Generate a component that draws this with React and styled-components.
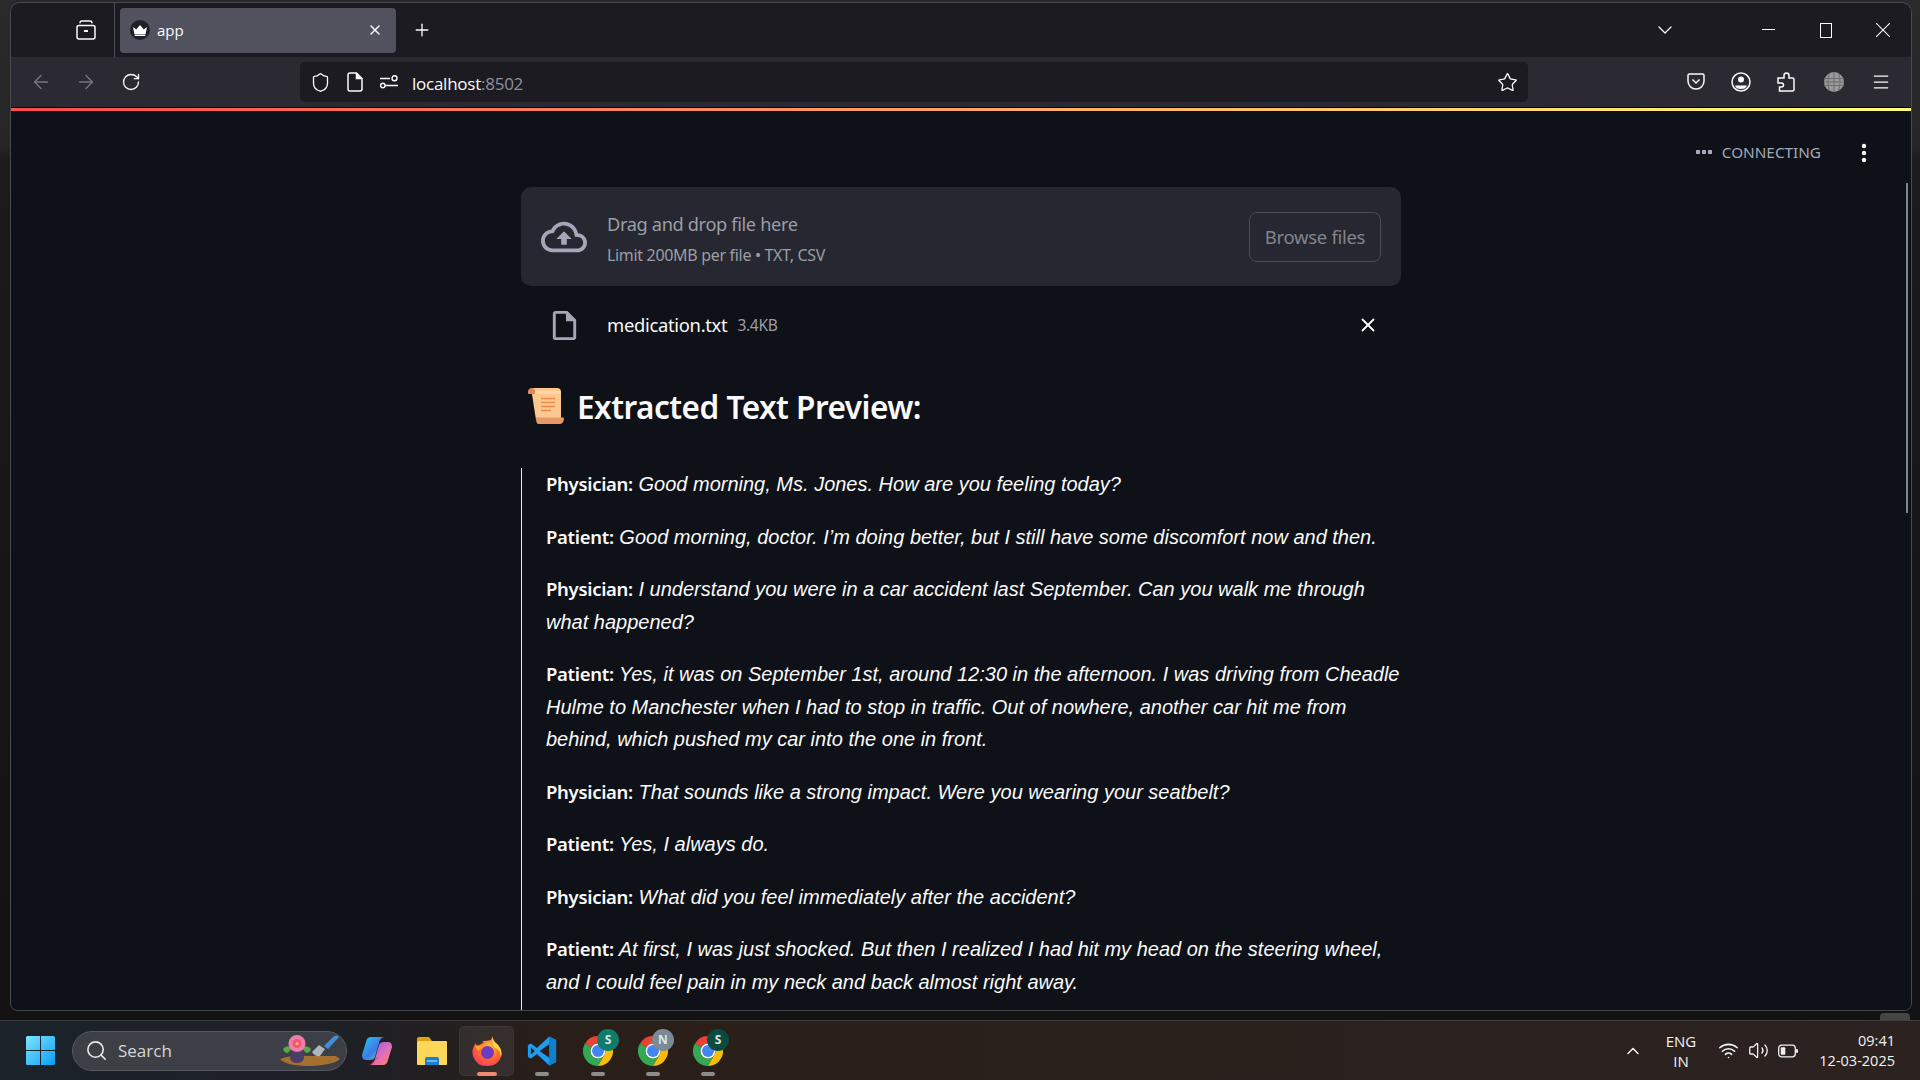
import React from 'react';
import styled, { createGlobalStyle } from 'styled-components';
import { ArrowLeft, ArrowRight, RotateCw, Star, Shield, Plus, X, ChevronDown, ChevronUp, Search, Wifi, Volume2, Menu, MoreVertical } from 'lucide-react';

const GlobalStyle = createGlobalStyle`
  html, body { margin: 0; padding: 0; width: 1920px; height: 1080px; overflow: hidden; background: #161616; }
  * { box-sizing: border-box; }
`;

const Colors = {
  Chrome: '#1c1b22',
  Toolbar: '#2b2a33',
  Page: '#0e1117',
  Text: '#fafafa',
  Muted: '#a3a8b8',
};

const UiFont = '"Noto Sans", "Open Sans", sans-serif';
const SystemFont = '"Open Sans", "Noto Sans", sans-serif';

const Screen = styled.div`
  position: relative;
  width: 1920px;
  height: 1080px;
  display: flex;
  flex-direction: column;
  background: linear-gradient(180deg, #2a2a2a 0, #262626 145px, #1b1b1b 160px, #161616 600px, #121212 100%);
`;

const BrowserWindow = styled.div`
  margin: 2px 8px 9px 10px;
  width: 1902px;
  height: 1009px;
  border: 1px solid #4a4a4e;
  border-bottom-color: #45464a;
  border-radius: 10px 10px 8px 8px;
  overflow: hidden;
  display: flex;
  flex-direction: column;
`;

const TabStrip = styled.div`
  height: 54px;
  flex: none;
  display: flex;
  align-items: center;
  background: ${Colors.Chrome};
  color: #fbfbfe;
`;

const Slot = styled.div`
  width: ${p => p.$w}px;
  margin-left: ${p => p.$ml || 0}px;
  height: 40px;
  flex: none;
  display: flex;
  align-items: center;
  justify-content: center;
  color: ${p => p.$color || '#fbfbfe'};
`;

const Separator = styled.div`
  width: 1px;
  height: 54px;
  margin-left: 8px;
  background: #4d4d55;
`;

const Tab = styled.div`
  width: 276px;
  height: 45px;
  margin-left: 5px;
  padding: 0 13px 0 10px;
  display: flex;
  align-items: center;
  border-radius: 4px;
  background: #52525e;
  font: 15px ${SystemFont};
`;

const Favicon = styled.div`
  width: 20px;
  height: 20px;
  border-radius: 50%;
  background: #1e1f2a;
  display: flex;
  align-items: center;
  justify-content: center;
  margin-right: 7px;
`;

const TabTitle = styled.span`
  flex: 1;
`;

const Spacer = styled.div`
  flex: 1;
`;

const NavBar = styled.div`
  height: 50px;
  flex: none;
  display: flex;
  align-items: center;
  padding-left: 7px;
  background: ${Colors.Toolbar};
`;

const AddressBar = styled.div`
  width: 1228px;
  height: 40px;
  margin-left: 147px;
  padding: 0 4px 0 2px;
  display: flex;
  align-items: center;
  border-radius: 5px;
  background: ${Colors.Chrome};
`;

const Url = styled.div`
  margin: 2px 0 0 6px;
  flex: 1;
  font: 17px ${SystemFont};
  color: #fbfbfe;
  letter-spacing: -0.25px;
`;

const Port = styled.span`
  color: #8f8f9d;
`;

const Rainbow = styled.div`
  height: 4px;
  flex: none;
  border-top: 1px solid #000;
  background: linear-gradient(90deg, #ff4b4b, #fffd80);
`;

const Page = styled.div`
  position: relative;
  flex: 1;
  overflow: hidden;
  background: ${Colors.Page};
  color: ${Colors.Text};
`;

const Status = styled.div`
  position: absolute;
  top: 29px;
  right: 90px;
  height: 24px;
  display: flex;
  align-items: center;
  gap: 10px;
  font: 15.3px ${UiFont};
  color: #a3a8b8;
`;

const Dots = styled.div`
  display: flex;
  gap: 2px;
`;

const Dot = styled.i`
  width: 4px;
  height: 4px;
  background: #a3a8b8;
`;

const Kebab = styled.div`
  position: absolute;
  top: 30px;
  right: 35px;
  display: flex;
  color: #fafafa;
`;

const ScrollThumb = styled.div`
  position: absolute;
  top: 72px;
  right: 3px;
  width: 2px;
  height: 330px;
  background: #84858a;
`;

const Main = styled.main`
  width: 880px;
  margin: 0 auto;
  padding-top: 76px;
`;

const Dropzone = styled.section`
  height: 99px;
  padding: 0 20px;
  display: flex;
  align-items: center;
  border-radius: 10px;
  background: #262730;
`;

const DropIcon = styled.div`
  width: 46px;
  display: flex;
  margin-right: 20px;
  color: ${Colors.Muted};
`;

const DropText = styled.div`
  flex: 1;
  padding-top: 4px;
`;

const DropTitle = styled.div`
  font: 18.2px/24px ${UiFont};
  color: #9c9ea6;
  letter-spacing: -0.35px;
`;

const DropHint = styled.div`
  margin-top: 8px;
  font: 16px/22px ${UiFont};
  color: #9c9ea6;
  letter-spacing: -0.32px;
`;

const BrowseButton = styled.button`
  width: 132px;
  height: 50px;
  border: 1px solid #4b4c54;
  border-radius: 8px;
  background: transparent;
  font: 18.5px ${UiFont};
  color: #83848b;
  letter-spacing: -0.3px;
`;

const FileRow = styled.div`
  height: 56px;
  margin-top: 11px;
  padding: 0 20px;
  display: flex;
  align-items: center;
`;

const FileIcon = styled.div`
  width: 46px;
  margin-right: 20px;
  display: flex;
  justify-content: center;
  color: ${Colors.Muted};
`;

const FileName = styled.span`
  margin-bottom: 2px;
  font: 18.4px ${UiFont};
  letter-spacing: -0.3px;
`;

const FileSize = styled.span`
  margin-left: 10px;
  font: 15.5px ${UiFont};
  color: #9c9ea6;
  letter-spacing: -0.3px;
`;

const FileClose = styled.div`
  margin-left: auto;
  margin-right: 2px;
  display: flex;
`;

const Heading = styled.h3`
  height: 60px;
  margin: 23px 0 0;
  padding-left: 7px;
  display: flex;
  align-items: center;
  gap: 13px;
  font: 600 31.5px ${UiFont};
  letter-spacing: -0.5px;
`;

const Quote = styled.blockquote`
  margin: 32px 0 0;
  padding: 0 0 40px 24px;
  border-left: 1px solid #e8e8ea;
  font: italic 20px/32.5px "Liberation Sans", Arial, sans-serif;
`;

const Line = styled.p`
  margin: 0 0 20px;
`;

const Speaker = styled.strong`
  font: 600 18.5px/1 ${UiFont};
  letter-spacing: -0.3px;
`;

const Taskbar = styled.footer`
  height: 60px;
  flex: none;
  display: flex;
  align-items: center;
  padding: 0 25px 0 26px;
  border-top: 1px solid #3d3d3f;
  background: linear-gradient(90deg, #1b222a 0, #1e2026 18%, #2a1e18 30%, #2a211d 60%, #2c2321 100%);
  color: #f2f2f2;
  font-family: ${SystemFont};
`;

const SearchPill = styled.div`
  width: 275px;
  height: 40px;
  margin-left: 17px;
  padding: 0 6px 0 12px;
  display: flex;
  align-items: center;
  border: 1px solid #55585e;
  border-radius: 20px;
  background: #3c3f46;
`;

const SearchLabel = styled.span`
  flex: 1;
  margin-left: 10px;
  font-size: 17px;
  color: #d6d6d6;
`;

const AppSlot = styled.div`
  position: relative;
  width: 55px;
  height: 50px;
  flex: none;
  display: flex;
  align-items: center;
  justify-content: center;
  margin-left: ${p => p.$ml || 0}px;
  ${p => p.$active && 'border-radius: 5px; background: rgba(255,255,255,.07); box-shadow: inset 0 0 0 1px rgba(255,255,255,.04);'}
`;

const Pip = styled.span`
  position: absolute;
  left: 50%;
  bottom: 0;
  width: ${p => (p.$active ? 20 : 14)}px;
  height: 4px;
  border-radius: 2px;
  transform: translateX(-50%);
  background: ${p => (p.$active ? '#ee8a70' : '#8c8c8c')};
`;

const Badge = styled.span`
  position: absolute;
  top: 3px;
  right: 6px;
  width: 22px;
  height: 22px;
  border-radius: 50%;
  display: flex;
  align-items: center;
  justify-content: center;
  background: ${p => p.$bg};
  color: #d9e6e3;
  font-size: 12px;
  font-weight: 700;
`;

const Tray = styled.div`
  margin-left: auto;
  display: flex;
  align-items: center;
`;

const TrayIcon = styled.div`
  width: ${p => p.$w}px;
  margin-left: ${p => p.$ml || 0}px;
  display: flex;
  justify-content: center;
`;

const Lang = styled.div`
  width: 40px;
  margin-left: 18px;
  text-align: center;
  font-size: 15px;
  line-height: 20px;
`;

const Clock = styled.div`
  width: 92px;
  margin-left: 3px;
  text-align: right;
  font-size: 14.5px;
  line-height: 20px;
`;

const EdgeTab = styled.div`
  position: absolute;
  right: 10px;
  top: 1013px;
  width: 30px;
  height: 7px;
  border-radius: 4px 4px 0 0;
  background: #454545;
`;

const Crown = () => (
  <svg width="14" height="11" viewBox="0 0 14 11" fill="#fff">
    <path d="M0 2l3.2 2.6L7 0l3.8 4.6L14 2l-1.4 7H1.4zM1.6 9.6h10.8V11H1.6z" />
  </svg>
);

const TabsIcon = () => (
  <svg width="20" height="20" viewBox="0 0 20 20" fill="none" stroke="#fbfbfe" strokeWidth="1.5">
    <rect x="1" y="5.5" width="18" height="13.5" rx="2" />
    <path d="M4 3.2Q4 1 6 1h8q2 0 2 2.2" />
    <path d="M8 11h4" strokeWidth="2" />
  </svg>
);

const DocIcon = () => (
  <svg width="16" height="20" viewBox="0 0 16 20" fill="none" stroke="#fbfbfe" strokeWidth="1.5">
    <path d="M3 1h6.5L15 6.5V17a2 2 0 0 1-2 2H3a2 2 0 0 1-2-2V3a2 2 0 0 1 2-2z" />
    <path d="M9.5 1v5.5H15" fill="#fbfbfe" />
  </svg>
);

const PermsIcon = () => (
  <svg width="18" height="14" viewBox="0 0 18 14" fill="none" stroke="#fbfbfe" strokeWidth="1.4">
    <path d="M0 3.5h10M5 10.5h13" />
    <circle cx="14.5" cy="3.2" r="2.5" />
    <circle cx="2.8" cy="10.5" r="2.2" />
  </svg>
);

const PocketIcon = () => (
  <svg width="18" height="18" viewBox="0 0 18 18" fill="none" stroke="#fbfbfe" strokeWidth="1.5">
    <path d="M2.5 1h13A1.5 1.5 0 0 1 17 2.5V8a8 8 0 0 1-16 0V2.5A1.5 1.5 0 0 1 2.5 1z" />
    <path d="M5.5 6.5L9 10l3.5-3.5" />
  </svg>
);

const ProfileIcon = () => (
  <svg width="20" height="20" viewBox="0 0 20 20">
    <circle cx="10" cy="10" r="9" fill="none" stroke="#fbfbfe" strokeWidth="1.5" />
    <circle cx="10" cy="7.5" r="3" fill="#fbfbfe" />
    <path d="M4 13.5h12Q15 17 10 17t-6-3.5z" fill="#fbfbfe" />
  </svg>
);

const PuzzleIcon = () => (
  <svg width="18" height="20" viewBox="0 0 18 20" fill="none" stroke="#fbfbfe" strokeWidth="1.5">
    <path d="M7 6V3.5a2.5 2.5 0 0 1 5 0V6h3.5A1.5 1.5 0 0 1 17 7.5V17.5a1.5 1.5 0 0 1-1.5 1.5H2.5v-4H4.5a2 2 0 0 0 0-4H1V6z" />
  </svg>
);

const GlobeIcon = () => (
  <svg width="20" height="20" viewBox="0 0 20 20">
    <circle cx="10" cy="10" r="10" fill="#9a9a9a" />
    <path d="M0 6.5h20M0 10h20M0 13.5h20M10 0v20M5.5 1c-2 5-2 13 0 18M14.5 1c2 5 2 13 0 18" stroke="#6d6d6d" strokeWidth="1" fill="none" />
  </svg>
);

const Maximize = () => (
  <svg width="12" height="15" viewBox="0 0 12 15" fill="none" stroke="#fbfbfe" strokeWidth="1">
    <rect x="0.5" y="0.5" width="11" height="14" />
  </svg>
);

const CloseThin = () => (
  <svg width="14" height="14" viewBox="0 0 14 14" stroke="#fbfbfe" strokeWidth="1.1">
    <path d="M0 0l14 14M14 0L0 14" />
  </svg>
);

const CloudUpload = () => (
  <svg width="46" height="46" viewBox="0 0 24 24" fill="currentColor">
    <path d="M19.35 10.04C18.67 6.59 15.64 4 12 4 9.11 4 6.6 5.64 5.35 8.04 2.34 8.36 0 10.91 0 14c0 3.31 2.69 6 6 6h13c2.76 0 5-2.24 5-5 0-2.64-2.05-4.78-4.65-4.96zM19 18H6c-2.21 0-4-1.79-4-4 0-2.05 1.53-3.76 3.56-3.97l1.07-.11.5-.95C8.08 7.14 9.94 6 12 6c2.62 0 4.88 1.86 5.39 4.43l.3 1.5 1.53.11c1.56.1 2.78 1.41 2.78 2.96 0 1.65-1.35 3-3 3zM8 13h2.55v3h2.9v-3H16l-4-4z" />
  </svg>
);

const FileGlyph = () => (
  <svg width="35" height="35" viewBox="0 0 24 24" fill="currentColor">
    <path d="M14 2H6c-1.1 0-1.99.9-1.99 2L4 20c0 1.1.89 2 1.99 2H18c1.1 0 2-.9 2-2V8l-6-6zM6 20V4h7v5h5v11H6z" />
  </svg>
);

const ScrollEmoji = () => (
  <svg width="36" height="36" viewBox="0 0 36 36">
    <path d="M3 0h26a4 4 0 0 1 4 4v28H8z" fill="#fbc98f" />
    <path d="M3 0a4 4 0 0 0-3 3v3h7V3a3 3 0 0 0-4-3z" fill="#e0875a" />
    <path d="M7 3h24a3 3 0 0 1 2 1v2H7z" fill="#fdd7a8" />
    <path d="M8 29.5h28q0 6.5-4 6.5H10q-2-1-2-6.5z" fill="#e99868" />
    <path d="M13 10.5h14M13 14.5h14M13 18.5h14M13 22.5h10" stroke="#e98a4e" strokeWidth="1.6" />
  </svg>
);

const WindowsLogo = () => (
  <svg width="29" height="29" viewBox="0 0 29 29">
    <defs>
      <linearGradient id="winGrad" x1="0" y1="0" x2="1" y2="1">
        <stop offset="0" stopColor="#7be6ff" />
        <stop offset="1" stopColor="#0f9cf5" />
      </linearGradient>
    </defs>
    <path d="M1.5 0H14v14H0V1.5A1.5 1.5 0 0 1 1.5 0zM15 0h12.5A1.5 1.5 0 0 1 29 1.5V14H15zM0 15h14v14H1.5A1.5 1.5 0 0 1 0 27.5zM15 15h14v12.5a1.5 1.5 0 0 1-1.5 1.5H15z" fill="url(#winGrad)" />
  </svg>
);

const SearchArt = () => (
  <svg width="60" height="31" viewBox="0 0 60 31">
    <path d="M0 24Q10 20 30 21h26l4 3q-6 6-30 7Q6 31 0 24z" fill="#a5702f" />
    <path d="M32 17l7-7 6 4-5 7q-5 1-8-4z" fill="#aeb6bd" />
    <path d="M44 11l9-9q4-3 6 0l-11 12z" fill="#3f8fd8" />
    <path d="M3 14q4-5 9-1l-4 5q-4 0-5-4zM31 14q-4-5-9-1l4 5q4 0 5-4z" fill="#5aa846" />
    <path d="M11 15h12l1 8q-1 5-7 5t-7-5z" fill="#4a3f63" />
    <circle cx="17" cy="8.5" r="8.5" fill="#ef7fa8" />
    <circle cx="17" cy="8.5" r="4.5" fill="#f4537f" />
    <circle cx="17" cy="8.5" r="1.6" fill="#f9c24a" />
  </svg>
);

const CopilotLogo = () => (
  <svg width="30" height="30" viewBox="0 0 30 30">
    <defs>
      <linearGradient id="copA" x1="0" y1="0" x2="1" y2="1">
        <stop offset="0" stopColor="#2fc9e8" />
        <stop offset="0.55" stopColor="#3a7bea" />
        <stop offset="1" stopColor="#6adf8a" />
      </linearGradient>
      <linearGradient id="copB" x1="0" y1="0" x2="1" y2="1">
        <stop offset="0" stopColor="#8a5ae6" />
        <stop offset="0.6" stopColor="#e86fb8" />
        <stop offset="1" stopColor="#fb8a3c" />
      </linearGradient>
    </defs>
    <path d="M9 1h13q-4 1-5 6l-4 14q-1 3-5 3H4Q0 24 0 19L4 6q1-5 5-5z" fill="url(#copA)" />
    <path d="M21 29H8q4-1 5-6l4-14q1-3 5-3h4q4 0 4 5l-4 13q-1 5-5 5z" fill="url(#copB)" />
    <path d="M8 29q4-1 5-6l4-2q-3 3-4 3z" fill="#f0483a" />
  </svg>
);

const FolderLogo = () => (
  <svg width="30" height="28" viewBox="0 0 30 28">
    <path d="M0 2a2 2 0 0 1 2-2h10l3 4H0z" fill="#dfa315" />
    <rect y="4" width="30" height="24" rx="1" fill="#fdd75a" />
    <path d="M8 28v-6a2 2 0 0 1 2-2h10a2 2 0 0 1 2 2v6z" fill="#1a7fd0" />
    <path d="M10 24h10" stroke="#8bc7f0" strokeWidth="1.5" />
  </svg>
);

const FirefoxLogo = () => (
  <svg width="30" height="30" viewBox="0 0 30 30">
    <defs>
      <radialGradient id="foxBody" cx="0.6" cy="0.35" r="0.8">
        <stop offset="0" stopColor="#ffbd3f" />
        <stop offset="0.5" stopColor="#ff6a2b" />
        <stop offset="1" stopColor="#ee2d78" />
      </radialGradient>
    </defs>
    <path d="M20 0q1 5 5 8 6 6 4 13-3 9-14 9Q4 30 1 20q-2-7 3-13 0 3 2 4 2-4 7-4-3 0-2-2 5 0 8-1 2-4 1-4z" fill="url(#foxBody)" />
    <path d="M20 0q1 5 5 8 6 6 4 13-1-8-7-10-2-5 -2-11z" fill="#ffd83d" />
    <circle cx="15.5" cy="16.5" r="6.5" fill="#6d3ac0" />
    <path d="M3 10q5-2 8 2-3 0-4 3-3-1-4-5z" fill="#ff9a2b" />
  </svg>
);

const VsCodeLogo = () => (
  <svg width="30" height="30" viewBox="0 0 100 100">
    <path fillRule="evenodd" d="M74 2L33 40 13 25 3 30v40l10 5 20-15 41 38 23-11V13zM74 28L43 50l31 22zM13 38v24l13-12z" fill="#1f9cf0" />
    <path d="M74 2l23 11v74L74 98z" fill="#0f7fd0" />
    <path d="M74 28L43 50l31 22z" fill="#2a1f1b" />
  </svg>
);

const ChromeLogo = () => (
  <svg width="30" height="30" viewBox="0 0 30 30">
    <path d="M2 7.5A15 15 0 0 1 28 7.5H15A7.5 7.5 0 0 0 8.5 11.25z" fill="#ea4335" />
    <path d="M2 7.5A15 15 0 0 0 15 30L21.5 18.75A7.5 7.5 0 0 1 8.5 11.25z" fill="#34a853" />
    <path d="M28 7.5A15 15 0 0 1 15 30L21.5 18.75A7.5 7.5 0 0 0 15 7.5z" fill="#fbbc04" />
    <circle cx="15" cy="15" r="7.5" fill="#fff" />
    <circle cx="15" cy="15" r="6" fill="#4285f4" />
  </svg>
);

const BatteryIcon = () => (
  <svg width="20" height="14" viewBox="0 0 20 14" fill="none">
    <rect x="0.7" y="1.2" width="16.6" height="11.6" rx="3" stroke="#f2f2f2" strokeWidth="1.3" />
    <rect x="2.8" y="3.2" width="4.5" height="7.6" rx="1" fill="#f2f2f2" />
    <rect x="18" y="5" width="2" height="4" rx="1" fill="#f2f2f2" />
  </svg>
);

const conversation = [
  ['Physician:', 'Good morning, Ms. Jones. How are you feeling today?'],
  ['Patient:', 'Good morning, doctor. I’m doing better, but I still have some discomfort now and then.'],
  ['Physician:', 'I understand you were in a car accident last September. Can you walk me through what happened?'],
  ['Patient:', 'Yes, it was on September 1st, around 12:30 in the afternoon. I was driving from Cheadle Hulme to Manchester when I had to stop in traffic. Out of nowhere, another car hit me from behind, which pushed my car into the one in front.'],
  ['Physician:', 'That sounds like a strong impact. Were you wearing your seatbelt?'],
  ['Patient:', 'Yes, I always do.'],
  ['Physician:', 'What did you feel immediately after the accident?'],
  ['Patient:', 'At first, I was just shocked. But then I realized I had hit my head on the steering wheel, and I could feel pain in my neck and back almost right away.'],
];

const chromes = [
  { letter: 'S', bg: '#0f7c6c' },
  { letter: 'N', bg: '#7b8a96' },
  { letter: 'S', bg: '#0b4a3f' },
];

export default function App() {
  return (
    <Screen>
      <GlobalStyle />
      <BrowserWindow>
        <TabStrip>
          <Slot $w={40} $ml={55}><TabsIcon /></Slot>
          <Separator />
          <Tab>
            <Favicon><Crown /></Favicon>
            <TabTitle>app</TabTitle>
            <X size={16} strokeWidth={2} />
          </Tab>
          <Slot $w={36} $ml={8}><Plus size={20} strokeWidth={1.6} /></Slot>
          <Spacer />
          <Slot $w={40}><ChevronDown size={24} strokeWidth={1.3} /></Slot>
          <Slot $w={57} $ml={55}><svg width="13" height="2"><rect width="13" height="1" fill="#fbfbfe" /></svg></Slot>
          <Slot $w={57}><Maximize /></Slot>
          <Slot $w={57}><CloseThin /></Slot>
        </TabStrip>
        <NavBar>
          <Slot $w={45} $color="#77767e"><ArrowLeft size={22} strokeWidth={1.5} /></Slot>
          <Slot $w={45} $color="#77767e"><ArrowRight size={22} strokeWidth={1.5} /></Slot>
          <Slot $w={45}><RotateCw size={20} strokeWidth={1.6} /></Slot>
          <AddressBar>
            <Slot $w={36}><Shield size={21} strokeWidth={1.5} /></Slot>
            <Slot $w={34}><DocIcon /></Slot>
            <Slot $w={34}><PermsIcon /></Slot>
            <Url>localhost<Port>:8502</Port></Url>
            <Slot $w={34}><Star size={21} strokeWidth={1.5} /></Slot>
          </AddressBar>
          <Slot $w={46} $ml={145}><PocketIcon /></Slot>
          <Slot $w={44}><ProfileIcon /></Slot>
          <Slot $w={45}><PuzzleIcon /></Slot>
          <Slot $w={52}><GlobeIcon /></Slot>
          <Slot $w={42}><Menu size={20} strokeWidth={1.5} /></Slot>
        </NavBar>
        <Rainbow />
        <Page>
          <Status>
            <Dots><Dot /><Dot /><Dot /></Dots>
            CONNECTING
          </Status>
          <Kebab><MoreVertical size={24} strokeWidth={2.4} /></Kebab>
          <ScrollThumb />
          <Main>
            <Dropzone>
              <DropIcon><CloudUpload /></DropIcon>
              <DropText>
                <DropTitle>Drag and drop file here</DropTitle>
                <DropHint>Limit 200MB per file • TXT, CSV</DropHint>
              </DropText>
              <BrowseButton>Browse files</BrowseButton>
            </Dropzone>
            <FileRow>
              <FileIcon><FileGlyph /></FileIcon>
              <FileName>medication.txt</FileName>
              <FileSize>3.4KB</FileSize>
              <FileClose><X size={22} strokeWidth={2} /></FileClose>
            </FileRow>
            <Heading><ScrollEmoji />Extracted Text Preview:</Heading>
            <Quote>
              {conversation.map(([who, said], i) => (
                <Line key={i}><Speaker>{who}</Speaker> {said}</Line>
              ))}
            </Quote>
          </Main>
        </Page>
      </BrowserWindow>
      <EdgeTab />
      <Taskbar>
        <WindowsLogo />
        <SearchPill>
          <Search size={23} strokeWidth={1.7} color="#e6e6e6" />
          <SearchLabel>Search</SearchLabel>
          <SearchArt />
        </SearchPill>
        <AppSlot $ml={2}><CopilotLogo /></AppSlot>
        <AppSlot><FolderLogo /></AppSlot>
        <AppSlot $active><FirefoxLogo /><Pip $active /></AppSlot>
        <AppSlot><VsCodeLogo /><Pip /></AppSlot>
        {chromes.map((c, i) => (
          <AppSlot key={i} $ml={i === 0 ? 1 : 0}>
            <ChromeLogo />
            <Badge $bg={c.bg}>{c.letter}</Badge>
            <Pip />
          </AppSlot>
        ))}
        <Tray>
          <TrayIcon $w={20}><ChevronUp size={22} strokeWidth={1.8} /></TrayIcon>
          <Lang>ENG<br />IN</Lang>
          <TrayIcon $w={24} $ml={15}><Wifi size={21} strokeWidth={1.8} /></TrayIcon>
          <TrayIcon $w={24} $ml={6}><Volume2 size={21} strokeWidth={1.5} /></TrayIcon>
          <TrayIcon $w={24} $ml={6}><BatteryIcon /></TrayIcon>
          <Clock>09:41<br />12-03-2025</Clock>
        </Tray>
      </Taskbar>
    </Screen>
  );
}
